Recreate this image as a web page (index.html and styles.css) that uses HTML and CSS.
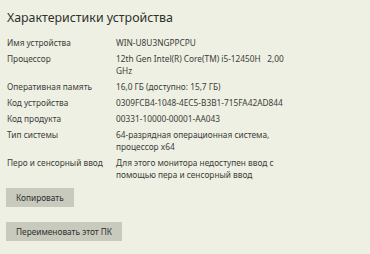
FILE: index.html
```html
<!DOCTYPE html>
<html lang="ru">
<head>
<meta charset="utf-8">
<link rel="stylesheet" href="styles.css">
</head>
<body>
<div class="page">
  <h1 class="title">Характеристики устройства</h1>
  <div class="specs">
    <div class="label">Имя устройства</div><div class="value">WIN-U8U3NGPPCPU</div>
    <div class="label">Процессор</div><div class="value">12th Gen Intel(R) Core(TM) i5-12450H&nbsp;&nbsp;&nbsp;2,00 GHz</div>
    <div class="label">Оперативная память</div><div class="value">16,0 ГБ (доступно: 15,7 ГБ)</div>
    <div class="label">Код устройства</div><div class="value">0309FCB4-1048-4EC5-B3B1-715FA42AD844</div>
    <div class="label">Код продукта</div><div class="value">00331-10000-00001-AA043</div>
    <div class="label">Тип системы</div><div class="value">64-разрядная операционная система, процессор x64</div>
    <div class="label">Перо и сенсорный ввод</div><div class="value">Для этого монитора недоступен ввод с помощью пера и сенсорный ввод</div>
  </div>
  <div class="actions">
    <button class="btn">Копировать</button>
    <button class="btn">Переименовать этот ПК</button>
  </div>
</div>
</body>
</html>
```
FILE: styles.css
```css
html, body {
  margin: 0;
  padding: 0;
  background: #edf0e3;
}
body {
  width: 370px;
  height: 254px;
  overflow: hidden;
  font-family: "Noto Sans", "Open Sans", sans-serif;
  color: #3d3e3a;
}
.page {
  padding: 8px 0 0 7px;
}
.title {
  margin: 0;
  font-size: 12.4px;
  font-weight: 400;
  line-height: 20px;
  color: #2f302c;
}
.specs {
  margin-top: 9px;
  display: grid;
  grid-template-columns: 109px 172px;
  row-gap: 4px;
  font-size: 8.3px;
  line-height: 12px;
}
.actions {
  margin-top: 7px;
  display: flex;
  flex-direction: column;
  align-items: flex-start;
  gap: 15px;
}
.btn {
  font-family: inherit;
  font-size: 8.3px;
  color: #2f302c;
  background: #c7cabd;
  border: none;
  height: 19px;
  padding: 0 10px;
  margin: 0 0 0 -1px;
}
```
